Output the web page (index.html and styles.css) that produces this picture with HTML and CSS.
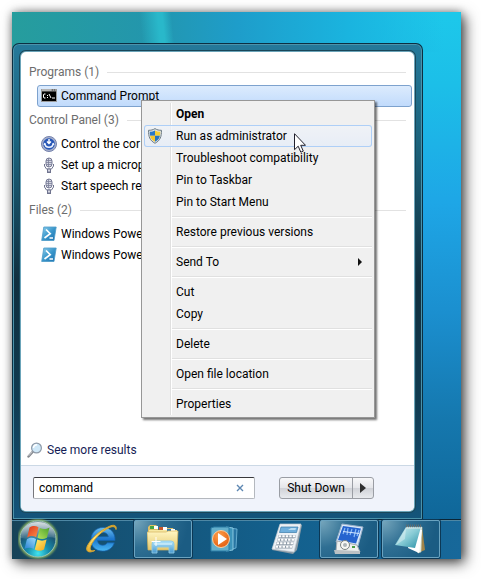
FILE: index.html
```html
<!DOCTYPE html>
<html lang="en">
<head>
<meta charset="utf-8">
<title>Start menu search</title>
<link rel="stylesheet" href="styles.css">
</head>
<body>
<svg class="defs" aria-hidden="true">
  <defs>
    <linearGradient id="psBlue" x1="0" y1="0" x2="1" y2="1"><stop offset="0" stop-color="#8fd0ee"/><stop offset=".5" stop-color="#3a97cb"/><stop offset="1" stop-color="#1c6fae"/></linearGradient>
    <symbol id="mic" viewBox="0 0 16 16">
      <rect x="5" y="1" width="6" height="9" rx="3" fill="#d5d7e3" stroke="#777b96"/>
      <path d="M5 3.500h6M5 5.500h6M5 7.500h6M7.500 1v9" stroke="#7b7f99" stroke-width=".8"/>
      <path d="M3.500 7v2l2 3h5l2-3V7M8 12v3M6 15.500h4" fill="none" stroke="#70748f"/>
      <path d="M6.500 12h3v3h-3z" fill="#d5d7e3" stroke="#70748f"/>
    </symbol>
    <symbol id="powershell" viewBox="0 0 16 16">
      <path d="M2.800 1h12.400L13 14.500H.700z" fill="url(#psBlue)" stroke="#4b9bc8" stroke-width=".8"/>
      <path d="M5 3.500l4.200 4.200L3.500 12M8.500 12h3.500" fill="none" stroke="#fff" stroke-width="1.700"/>
    </symbol>
  </defs>
</svg>
<main class="desktop">
  <section class="start-menu" aria-label="Start menu">
    <div class="panel">
      <div class="results">
        <h2>Programs (1)</h2>
        <ul>
          <li class="selected"><svg viewBox="0 0 16 16"><path d="M0 1h16v13H0z" fill="#9a9a9a"/><path d="M1 3.500h14V13H1z" fill="#000"/><path d="M1 1.500h9v1H1z" fill="#c9c9c9"/><path d="M11 2h1M13 2h1" stroke="#444"/><path d="M4.500 6H3L2.500 7v2l.5 1h1.500M6.500 7v1M6.500 9v1M8 6l2 4M11 10h3" fill="none" stroke="#fff"/></svg>Command Prompt</li>
        </ul>
        <h2>Control Panel (3)</h2>
        <ul class="covered">
          <li><svg viewBox="0 0 16 16"><circle cx="8" cy="8" r="7.500" fill="#a7b1cd" stroke="#7481ac"/><circle cx="8" cy="8" r="5.800" fill="#2857b8"/><path d="M8 3v3.500M6 5.500l2 2 2-2" stroke="#fff" stroke-width="1.400" fill="none"/><path d="M4 7.500c0 5 8 5 8 0M4 7l-.8 2M12 7l.8 2" stroke="#eef4ff" stroke-width="1.500" fill="none"/></svg>Control the cor</li>
          <li><svg><use href="#mic"/></svg>Set up a microp</li>
          <li><svg><use href="#mic"/></svg>Start speech rec</li>
        </ul>
        <h2>Files (2)</h2>
        <ul class="covered">
          <li><svg><use href="#powershell"/></svg>Windows Powe</li>
          <li><svg><use href="#powershell"/></svg>Windows Powe</li>
        </ul>
      </div>
      <a class="more" href="#results"><svg viewBox="0 0 16 16"><path d="M1.500 14.500L6 9.500" stroke="#85888e" stroke-width="2.400" stroke-linecap="round"/><path d="M1.500 14L5.500 9.500" stroke="#d7d9dc" stroke-width=".8"/><circle cx="9.500" cy="6" r="4.900" fill="#cfe8f8" stroke="#8e9aa8" stroke-width="1.200"/><path d="M6.500 6c0-2 1.500-3.200 3.500-3.200" fill="none" stroke="#fff" stroke-width="1.500"/></svg>See more results</a>
      <footer class="menu-foot">
        <div class="search">
          <input type="text" value="command" aria-label="Search programs and files">
          <button type="button" class="clear" aria-label="Clear search"><svg viewBox="0 0 8 8"><path d="M1 1l6 6M7 1L1 7" stroke="#5d87b2" stroke-width="1.400"/></svg></button>
        </div>
        <div class="power">
          <button type="button" class="shutdown">Shut Down</button>
          <button type="button" class="options" aria-label="Shut down options"><svg viewBox="0 0 6 10"><path d="M0 0l6 5-6 5z" fill="#303030"/></svg></button>
        </div>
      </footer>
    </div>
  </section>
  <nav class="taskbar" aria-label="Taskbar">
    <button type="button" class="orb" aria-label="Start">
      <svg viewBox="0 0 40 40">
        <defs>
          <radialGradient id="orbFill" cx=".5" cy=".9" r=".85"><stop offset="0" stop-color="#42e4ee"/><stop offset=".35" stop-color="#168fae"/><stop offset=".7" stop-color="#1b5776"/><stop offset="1" stop-color="#5d7b89"/></radialGradient>
          <linearGradient id="orbGloss" x1="0" y1="0" x2="0" y2="1"><stop offset="0" stop-color="#fff" stop-opacity=".75"/><stop offset="1" stop-color="#fff" stop-opacity=".1"/></linearGradient>
          <linearGradient id="fr" x1="0" y1="0" x2="1" y2="1"><stop offset="0" stop-color="#d9331c"/><stop offset="1" stop-color="#ff9048"/></linearGradient>
          <linearGradient id="fg" x1="1" y1="0" x2="0" y2="1"><stop offset="0" stop-color="#49a02b"/><stop offset="1" stop-color="#b6e45c"/></linearGradient>
          <linearGradient id="fb" x1="0" y1="1" x2="1" y2="0"><stop offset="0" stop-color="#2680d0"/><stop offset="1" stop-color="#9cdcff"/></linearGradient>
          <linearGradient id="fy" x1="1" y1="1" x2="0" y2="0"><stop offset="0" stop-color="#f2a51a"/><stop offset="1" stop-color="#ffee70"/></linearGradient>
          <filter id="glow" x="-20%" y="-20%" width="140%" height="140%"><feGaussianBlur stdDeviation="1"/></filter>
        </defs>
        <circle cx="20" cy="20" r="18.500" fill="none" stroke="#a2c95f" stroke-width="2" filter="url(#glow)"/>
        <circle cx="20" cy="20" r="18" fill="url(#orbFill)" stroke="#9cc4b4" stroke-width="1"/>
        <path d="M3 19C3 9 10 3 20 3s17 6 17 16c-8-3-14 3-34 0z" fill="url(#orbGloss)"/>
        <path d="M11.500 8.500c3.500-2 6-1.800 9-.3l-2.300 10c-3.300-1.600-5.500-1.400-9 .4z" fill="url(#fr)"/>
        <path d="M21.800 9c3.300 1.600 6 1.500 9.700-.4l-2.600 10.200c-3.400 1.700-6 1.500-9.400 0z" fill="url(#fg)"/>
        <path d="M8.900 20.200c3.500-1.800 5.700-1.800 9.100-.3l-2.300 10c-3.300-1.600-6-1.500-9.200.2z" fill="url(#fb)"/>
        <path d="M19.300 20.500c3.400 1.500 5.900 1.600 9.300 0l-2.600 10c-3.300 1.700-6 1.700-9.200 0z" fill="url(#fy)"/>
      </svg>
    </button>
    <button type="button" class="task" aria-label="Internet Explorer">
      <svg viewBox="0 0 32 32">
        <defs><linearGradient id="ieBlue" x1="0" y1="0" x2="0" y2="1"><stop offset="0" stop-color="#6cc0f0"/><stop offset=".5" stop-color="#1a74cc"/><stop offset="1" stop-color="#4ab8f4"/></linearGradient><linearGradient id="ieGold" x1="0" y1="1" x2="1" y2="0"><stop offset="0" stop-color="#e4a927"/><stop offset=".4" stop-color="#ffe77e"/><stop offset="1" stop-color="#d49b1e"/></linearGradient></defs>
        <path d="M30 17.500H12.500c.3 3 2.300 4.700 5.200 4.700 2.300 0 3.700-.9 4.600-2.400h7c-1.500 5-5.800 8.300-11.600 8.300C10.500 28.100 6 23.500 6 16.800 6 10 11 4.500 18 4.500c7.500 0 12.500 5.200 12 13zM12.700 13.700h10.600c-.3-2.500-2.300-4.200-5.200-4.200-3 0-5 1.600-5.400 4.200z" fill="url(#ieBlue)" stroke="#1561ac" stroke-width=".7"/>
        <path d="M31 6.500C32 2.500 29 1 24 3.500 15 7.500 6 15.500 2.300 23c-2 4.500.7 8 7.500 4.500-4 1.200-5.500-.8-4.100-4.500C8.500 16 17 8 24.500 4.500c3.500-1.600 6-1 6.500 2z" fill="url(#ieGold)" stroke="#d6a530" stroke-width="1"/>
      </svg>
    </button>
    <button type="button" class="task open" aria-label="Windows Explorer">
      <svg viewBox="0 0 32 32">
        <defs><linearGradient id="folder" x1="0" y1="0" x2="0" y2="1"><stop offset="0" stop-color="#fff6c2"/><stop offset="1" stop-color="#e5c86e"/></linearGradient><linearGradient id="stand" x1="0" y1="0" x2="0" y2="1"><stop offset="0" stop-color="#b2e5fc"/><stop offset="1" stop-color="#4798ce"/></linearGradient></defs>
        <path d="M1 27V4l2-2h6l2 2v3h8l1-2h6l1 2h3v20z" fill="#dfbf64"/>
        <path d="M3 3h5v3H3z" fill="#48a443"/><path d="M7 3h4v3H7z" fill="#fff"/>
        <path d="M2 7h10l1-2h6l1 2h10v19H2z" fill="#f7e9a3"/>
        <path d="M12 4h4v3h-4z" fill="#c7582c"/><path d="M16 4h4v3h-4z" fill="#fff"/>
        <path d="M20 6h4v3h-4z" fill="#347cae"/><path d="M24 6h4v3h-4z" fill="#fff"/>
        <path d="M0 9h19l2-1h10l-1 19H1z" fill="url(#folder)" stroke="#d2b35b" stroke-width=".7"/>
        <path d="M5 30V21q0-3 3-3h16q3 0 3 3v9h-5v-6H10v6z" fill="url(#stand)" stroke="#8cc8e4" stroke-width=".9"/>
        <path d="M7 21h18" stroke="#e8faff"/><path d="M9 14v9M4.500 18.500h9" stroke="#fff" stroke-width="1"/>
      </svg>
    </button>
    <button type="button" class="task" aria-label="Windows Media Player">
      <svg viewBox="0 0 32 32">
        <defs><radialGradient id="play" cx=".4" cy=".3" r=".8"><stop offset="0" stop-color="#ffa04a"/><stop offset="1" stop-color="#e0560a"/></radialGradient></defs>
        <path d="M20 5l8 1-1 19-7 2z" fill="#2875a2" stroke="#76bddd" stroke-width=".8"/><path d="M17 4l7 1v22l-7 1z" fill="#3d94ba" stroke="#9cd7ec" stroke-width=".8"/>
        <path d="M2 5l3-1h15v24H2z" fill="#64afcb" stroke="#2a7ca5"/>
        <circle cx="12" cy="16" r="8.500" fill="url(#play)" stroke="#f7d1a3"/><path d="M9 10v12l9-6z" fill="#fff"/>
      </svg>
    </button>
    <button type="button" class="task" aria-label="Calculator">
      <svg viewBox="0 0 32 32">
        <path d="M9 2h22l-5 25-4 4L1 27z" fill="#8c9ba6"/><path d="M9 1h21l-7 28L1 26z" fill="#edf1f5" stroke="#c2cad1" stroke-width=".7"/>
        <path d="M10 4h17l-1.500 5.500H8.500z" fill="#6fafdc" stroke="#3b7baa" stroke-width=".7"/><path d="M20 5h5l-.6 2H17z" fill="#b9ddf3"/>
        <path d="M7.500 13.500h17M6.300 17h17M5.300 20.500h17M4.300 24h17" stroke="#919eaa" stroke-width="2.800"/>
        <path d="M7.800 13.300h16.500M6.600 16.800h16.500M5.600 20.300h16.500M4.600 23.800h16.500" stroke="#fff" stroke-width="1.900" stroke-dasharray="2.400 1.100"/>
      </svg>
    </button>
    <button type="button" class="task open" aria-label="Control settings">
      <svg viewBox="0 0 32 32">
        <path d="M9 1l21 3-5 19L3 19z" fill="#d9e9f8" stroke="#9ab0cb"/><path d="M10 3l18 2.500-5 15L5 17z" fill="#2564cf"/>
        <path d="M12 5l-2 6M15 5l-1 7M19 6l-2 6M23 6l-2 8M26 7l-2 6" stroke="#8abcf6" stroke-width="1.200"/><path d="M10 8.500l16 2" stroke="#cfe4ff"/>
        <path d="M4 18l20 4 3 7-24-1z" fill="#eef0ee" stroke="#a6adb1"/><path d="M1 27l26 1v3H2z" fill="#bbc1c4"/>
        <circle cx="12" cy="22" r="4.500" fill="#f8f8f4" stroke="#7a8282"/><circle cx="12" cy="22" r="2" fill="#aeb5b8"/><path d="M19 24h3" stroke="#4b9c45" stroke-width="2"/>
      </svg>
    </button>
    <button type="button" class="task open" aria-label="Notepad">
      <svg viewBox="0 0 32 32">
        <defs><linearGradient id="pad" x1="0" y1="0" x2="1" y2="1"><stop offset="0" stop-color="#d9f2f4"/><stop offset=".5" stop-color="#87cbd5"/><stop offset="1" stop-color="#288fa5"/></linearGradient></defs>
        <path d="M27 4l3 23-5 2-3-24z" fill="#a18449"/><path d="M12 4h15l-1 25-3 1z" fill="#f1f6ea" stroke="#b8c5b5" stroke-width=".6"/>
        <path d="M18 7l-5 18 11 5 3-23z" fill="#fff"/><path d="M11 4h15l-6 21L0 22z" fill="url(#pad)"/><path d="M11 5L1 22l9-6z" fill="#fff" opacity=".35"/>
        <path d="M11 3h16" stroke="#616d70" stroke-width="3" stroke-dasharray="1 1"/><path d="M11 5h16" stroke="#dee7e5"/>
      </svg>
    </button>
  </nav>
  <div class="context-menu" role="menu">
    <button type="button" role="menuitem" class="default">Open</button>
    <button type="button" role="menuitem" class="hover"><svg class="shield" viewBox="0 0 16 16"><path d="M8 .6c2 1.300 4 1.700 6.500 1.700 0 6.200-1 10-6.500 13-5.500-3-6.500-6.800-6.500-13C4 2.300 6 1.900 8 .6z" fill="#dce1e3" stroke="#6f7d87"/><path d="M8 2.500v5.300H3.100c-.3-1.300-.3-2.700-.3-4C5 3.700 6.500 3.300 8 2.500z" fill="#2777c9"/><path d="M8 2.500v5.300h4.900c.3-1.300.3-2.700.3-4C11 3.700 9.500 3.300 8 2.500z" fill="#f5cf35"/><path d="M3.100 7.800H8v6C5 12.200 3.500 10.500 3.100 7.800z" fill="#f4c62c"/><path d="M12.900 7.800H8v6c3-1.600 4.500-3.300 4.900-6z" fill="#2674bf"/></svg>Run as administrator</button>
    <button type="button" role="menuitem">Troubleshoot compatibility</button>
    <button type="button" role="menuitem">Pin to Taskbar</button>
    <button type="button" role="menuitem">Pin to Start Menu</button>
    <hr>
    <button type="button" role="menuitem">Restore previous versions</button>
    <hr>
    <button type="button" role="menuitem">Send To<svg class="arrow" viewBox="0 0 4 8"><path d="M0 0l4 4-4 4z" fill="#111"/></svg></button>
    <hr>
    <button type="button" role="menuitem">Cut</button>
    <button type="button" role="menuitem">Copy</button>
    <hr>
    <button type="button" role="menuitem">Delete</button>
    <hr>
    <button type="button" role="menuitem">Open file location</button>
    <hr>
    <button type="button" role="menuitem">Properties</button>
  </div>
  <svg class="cursor" viewBox="0 0 12 20" aria-hidden="true"><path d="M.5.700v16l3.700-3.500 2.600 6 2.500-1.100-2.600-5.800h4.800z" fill="#fff" stroke="#20202c"/></svg>
</main>
</body>
</html>
```
FILE: styles.css
```css
* {
  box-sizing: border-box;
}

body {
  margin: 0;
  padding: 12px 20px 20px 12px;
  background: #fff;
  color: #000;
  font: 12px/20px Roboto, "Open Sans", sans-serif;
}

button,
input {
  font: inherit;
  color: inherit;
}

button {
  margin: 0;
  padding: 0;
  border: 0;
  background: none;
}

svg {
  flex: none;
}

h2,
ul {
  margin: 0;
  padding: 0;
}

.defs {
  position: absolute;
  width: 0;
  height: 0;
}

.desktop {
  position: relative;
  padding-top: 31px;
  background:
    linear-gradient(84deg, transparent 29%, #29b8ca 33%, #29b8ca 34%, transparent 36%) top / 100% 40px no-repeat,
    linear-gradient(90deg, #269d9d 0, #2396ad 31%, #1e9dca 50%, #1ab4df 75%, transparent 96%) top / 100% 40px no-repeat,
    linear-gradient(180deg, #1dc8ea 0, #1cbfe8 13%, #1ea6e6 35%, #1b8fcf 55%, #1577ad 75%, #0d6091 100%);
  box-shadow: 4px 4px 13px #000000b0, 0 0 8px #00000050;
}

.start-menu {
  width: calc(100% - 38px);
  padding: 8px;
  border: 1px solid #0b2f42;
  border-bottom: 0;
  border-radius: 7px 7px 0 0;
  background: linear-gradient(180deg, #25799a 0, #1b647e 20%, #102f3f 50%, #103b51 75%, #14557b 100%);
  box-shadow: inset 0 0 0 1px #4b92aa;
}

.panel {
  overflow: hidden;
  border-radius: 5px;
  background: #fff;
  box-shadow: 0 0 0 1px #6ba4b9, 0 0 0 2px #194659;
}

.results {
  padding: 9px 8px 0;
  min-height: 387px;
}

h2 {
  display: flex;
  align-items: center;
  gap: 8px;
  height: 22px;
  margin: 2px 0;
  color: #6d6d6d;
  font-size: 12px;
  font-weight: 400;
}

h2:first-child {
  margin-top: 0;
}

h2::after {
  content: "";
  flex: 1;
  height: 1px;
  background: #e2e2e2;
}

ul {
  padding: 0 0 1px 8px;
  list-style: none;
}

.covered {
  width: 112px;
}

li {
  display: flex;
  align-items: center;
  gap: 4px;
  height: 21px;
  padding-left: 4px;
  white-space: nowrap;
  overflow: hidden;
}

li svg {
  width: 16px;
  height: 16px;
}

.selected {
  height: 22px;
  margin: 0 -6px -1px 0;
  padding-left: 3px;
  border: 1px solid #7da2ce;
  border-radius: 3px;
  background: linear-gradient(180deg, #dcebfd, #c1dbfc);
}

.more {
  display: flex;
  align-items: center;
  gap: 4px;
  height: 26px;
  padding: 0 6px 4px;
  color: #151c55;
  text-decoration: none;
}

.more svg {
  width: 16px;
  height: 16px;
}

.menu-foot {
  display: flex;
  justify-content: space-between;
  padding: 11px 40px 12px 12px;
  border-top: 1px solid #cbd8e5;
  background: #f0f3fb;
}

.search {
  display: flex;
  align-items: center;
  width: 222px;
  height: 22px;
  border: 1px solid #b4b8be;
  border-top-color: #38383c;
  border-left-color: #77777c;
  border-radius: 2px;
  background: #fff;
}

.search input {
  flex: 1;
  min-width: 0;
  height: 20px;
  padding: 0 5px;
  border: 0;
  outline: 0;
  background: none;
}

.clear {
  display: flex;
  padding: 0 10px;
}

.clear svg {
  width: 8px;
  height: 8px;
}

.power {
  display: flex;
  height: 22px;
  border: 1px solid #9a9da4;
  border-radius: 3px;
  background: linear-gradient(180deg, #f8f8fa 0, #e5e6ea 48%, #cfd1d7 50%, #e8eaee 100%);
}

.power button {
  display: flex;
  align-items: center;
  justify-content: center;
}

.shutdown {
  width: 72px;
}

.options {
  width: 21px;
  border-left: 1px solid #9a9da4;
}

.options svg {
  width: 6px;
  height: 10px;
}

.taskbar {
  display: flex;
  gap: 4px;
  height: 40px;
  padding-bottom: 1px;
  border-top: 1px solid #0a2536;
  background: linear-gradient(90deg, #174358 0, #155173 20%, #13608d 60%, #17689a 100%);
  box-shadow: inset 0 1px #4e87a4;
}

.taskbar button {
  display: flex;
  align-items: center;
  justify-content: center;
}

.orb {
  width: 52px;
  margin-right: 4px;
}

.orb svg {
  width: 40px;
  height: 40px;
}

.task {
  width: 58px;
  border-radius: 2px;
}

.task svg {
  width: 32px;
  height: 32px;
}

.taskbar .open {
  border: 1px solid #6aa3c0;
  background: radial-gradient(circle at 0 0, #76a6bc 0, #2f6f93 40%, #1b5c83 80%);
  box-shadow: 0 0 0 1px #0c3855;
}

.context-menu {
  position: absolute;
  top: 88px;
  left: 129px;
  width: 234px;
  padding: 2px;
  border: 1px solid #979797;
  background: linear-gradient(90deg, transparent 28px, #e0e0e0 28px 29px, #fff 29px 30px, transparent 30px) 0 2px / 100% calc(100% - 4px) no-repeat #f0f0f0;
  box-shadow: 2px 2px 2px #0000008c;
}

.context-menu button {
  display: flex;
  position: relative;
  align-items: center;
  width: 100%;
  height: 22px;
  padding: 0 10px 0 32px;
  border-radius: 3px;
  white-space: nowrap;
}

.context-menu .default {
  font-weight: 700;
}

.context-menu .hover {
  background: linear-gradient(180deg, #f0f3f8c0, #e4ecf8c0);
  box-shadow: inset 0 0 0 1px #aecff7;
}

.context-menu .shield {
  position: absolute;
  left: 3px;
  width: 16px;
  height: 16px;
}

.arrow {
  width: 4px;
  height: 8px;
  margin-left: auto;
}

hr {
  height: 2px;
  margin: 3px 0 3px 28px;
  border: 0;
  border-top: 1px solid #e0e0e0;
  background: #fff;
}

.cursor {
  position: absolute;
  top: 121px;
  left: 282px;
  width: 12px;
  height: 20px;
}
```
